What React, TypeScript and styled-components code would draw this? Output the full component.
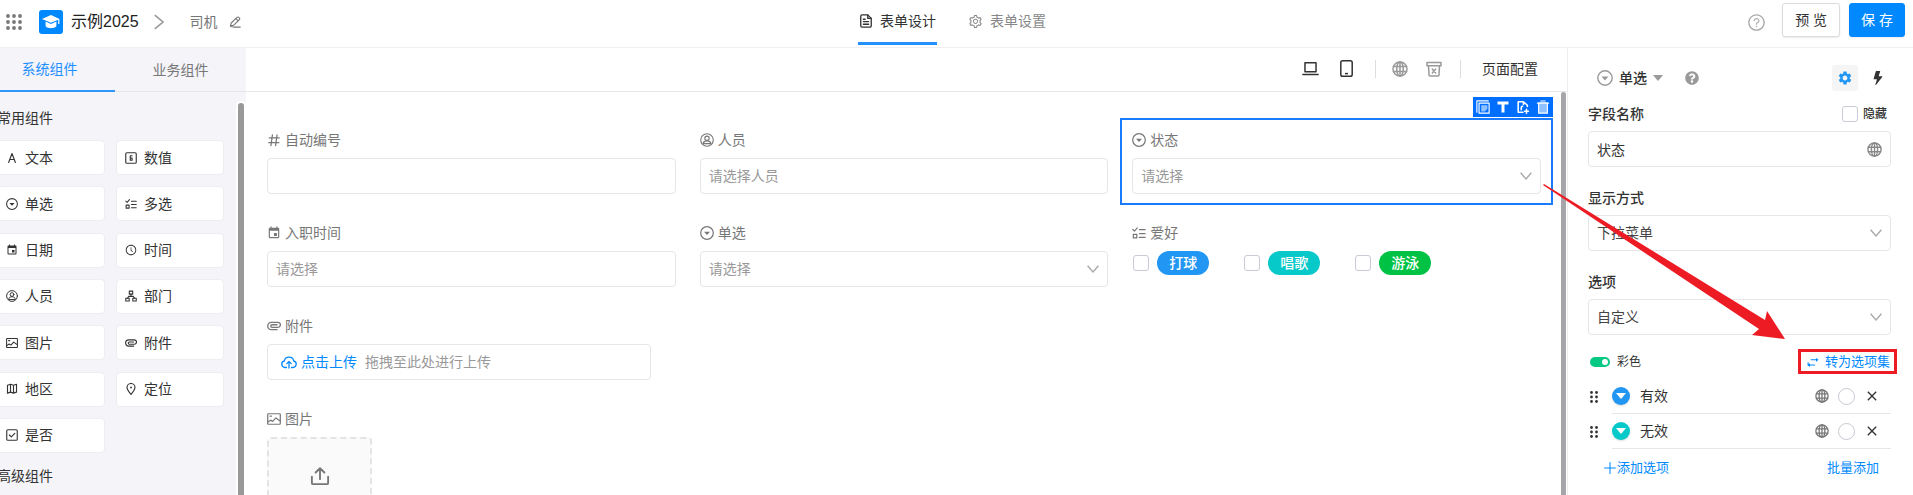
import React from "react";
import styled, { createGlobalStyle, css } from "styled-components";
import { FaQuestionCircle } from "react-icons/fa";
import { MdSettings, MdEvent, MdClose } from "react-icons/md";
import {
  AiOutlineSetting,
  AiOutlineQuestionCircle,
  AiOutlineClockCircle,
} from "react-icons/ai";
import { BsLightningFill } from "react-icons/bs";

const blue = "#0089ff";
const line = "#e6e6e6";

const Global = createGlobalStyle`
  *, *::before, *::after { box-sizing: border-box; }
  html, body, #root { height: 100%; }
  body {
    margin: 0;
    background: #fff;
    color: #333;
    font-family: "Liberation Sans", "Noto Sans CJK SC", sans-serif;
    font-size: 14px;
    line-height: 20px;
    overflow: hidden;
  }
  button, input, select { font: inherit; color: inherit; margin: 0; }
  button { border: 0; background: none; padding: 0; cursor: pointer; }
  a { text-decoration: none; color: inherit; }
  h1, h2 { margin: 0; font: inherit; }
  svg { display: block; flex: none; }
`;

/* ---------- icons ---------- */

type IconProps = { size?: number };

const Svg = ({
  size = 14,
  w = 1.3,
  children,
}: {
  size?: number;
  w?: number;
  children: React.ReactNode;
}) => (
  <svg
    width={size}
    height={size}
    viewBox="0 0 16 16"
    fill="none"
    stroke="currentColor"
    strokeWidth={w}
    strokeLinecap="round"
    strokeLinejoin="round"
    aria-hidden="true"
  >
    {children}
  </svg>
);

const AppsIcon = () => (
  <svg width="16" height="16" viewBox="0 0 16 16" fill="currentColor" aria-hidden="true">
    {[2, 8, 14].map((y) =>
      [2, 8, 14].map((x) => <circle key={`${x}-${y}`} cx={x} cy={y} r="1.9" />)
    )}
  </svg>
);

const CapIcon = () => (
  <svg width="20" height="20" viewBox="0 0 20 20" fill="currentColor" aria-hidden="true">
    <path d="M10 3 1 6.9l9 3.9 7.2-3.1V12h1.2V6.9z" />
    <path d="M4.6 9.6v4.2c0 1.2 2.6 2.4 5.4 2.4s5.4-1.2 5.4-2.4V9.6L10 12z" />
  </svg>
);

const ChevronRight = () => (
  <svg width="10" height="16" viewBox="0 0 10 16" fill="none" stroke="#999" strokeWidth="1.6" aria-hidden="true">
    <path d="M.8 1.2 9 8 .8 14.8" />
  </svg>
);

const ChevronDown = () => (
  <svg width="12" height="8" viewBox="0 0 12 8" fill="none" stroke="#aaa" strokeWidth="1.4" aria-hidden="true">
    <path d="M.6.8 6 7 11.4.8" />
  </svg>
);

const PenIcon = ({ size = 12 }: IconProps) => (
  <Svg size={size} w={1.5}>
    <path d="M2 13.5 3 9.3 10.6 1.8a1.6 1.6 0 0 1 2.4 0l.8.8a1.6 1.6 0 0 1 0 2.3l-7.4 7.4z" />
    <path d="m9.2 3.4 3 3M2 13.500c2 1.500 4 1.300 6 1.300h7" />
  </Svg>
);

const DocIcon = ({ size = 14 }: IconProps) => (
  <Svg size={size} w={1.5}>
    <path d="M10 1H3.5A1.5 1.5 0 0 0 2 2.500v11A1.5 1.5 0 0 0 3.500 15h9a1.5 1.5 0 0 0 1.500-1.500V5z" />
    <path d="M10 1v4h4M5 6h2M5 8.700h6M5 11.700h6" />
  </Svg>
);

const LetterIcon = ({ size = 12 }: IconProps) => (
  <Svg size={size} w={1.5}>
    <path d="M3.500 14 8 2l4.500 12M5 10h6" />
  </Svg>
);

const NumberIcon = ({ size = 12 }: IconProps) => (
  <Svg size={size} w={1.5}>
    <rect x="1" y="1" width="14" height="14" rx="1.500" />
    <path d="M9.500 5H7v6h2.500V8H7" />
  </Svg>
);

const RadioIcon = ({ size = 12 }: IconProps) => (
  <Svg size={size} w={1.4}>
    <circle cx="8" cy="8" r="7.200" />
    <path d="M4.600 6.600h6.800L8 10.400z" fill="currentColor" stroke="none" />
  </Svg>
);

const MultiIcon = ({ size = 12 }: IconProps) => (
  <Svg size={size} w={1.4}>
    <path d="m1 4 1.800 1.800L6 2.200M8.500 4.200H15M8.500 8.600H15M8.500 13H15" />
    <rect x="1.500" y="9.500" width="4" height="4" />
  </Svg>
);

const PersonIcon = ({ size = 12 }: IconProps) => (
  <Svg size={size} w={1.3}>
    <circle cx="8" cy="8" r="7.200" />
    <circle cx="8" cy="6" r="2.500" />
    <path d="M3.600 12.200c.4-2.400 2-3.200 4.400-3.200s4 .8 4.400 3.200z" />
  </Svg>
);

const DeptIcon = ({ size = 12 }: IconProps) => (
  <Svg size={size} w={1.4}>
    <rect x="5.700" y="1.500" width="4.600" height="4" />
    <rect x="1" y="11" width="4.600" height="3.600" />
    <rect x="10.400" y="11" width="4.600" height="3.600" />
    <path d="M8 5.500v3M3.300 11 5 8.500h6l1.700 2.500" />
  </Svg>
);

const ImageIcon = ({ size = 12 }: IconProps) => (
  <Svg size={size} w={1.4}>
    <rect x=".8" y="2" width="14.400" height="12" rx=".8" />
    <path d="m1 11.500 3.200-2.200 2.300 1.500 3.700-4 4.800 3.400M3.500 4.800h1.500" />
  </Svg>
);

const ClipIcon = ({ size = 12 }: IconProps) => (
  <Svg size={size} w={1.5}>
    <path d="M11.500 12.200H5A4.200 4.200 0 0 1 5 3.800h7.400a2.900 2.900 0 0 1 0 5.800H5.800a1.500 1.500 0 0 1 0-3h5.700" />
  </Svg>
);

const MapIcon = ({ size = 12 }: IconProps) => (
  <Svg size={size} w={1.5}>
    <path d="M2 3v10.500l4-1.300 4 1.300 4-1.300V1.700L10 3 6 1.700zM6 1.700v10.500M10 3v10.500" />
  </Svg>
);

const PinIcon = ({ size = 12 }: IconProps) => (
  <Svg size={size} w={1.5}>
    <path d="M8 15.200C5 11.500 2.700 9 2.700 6a5.300 5.300 0 0 1 10.600 0c0 3-2.300 5.500-5.300 9.200z" />
    <circle cx="8" cy="6" r="1.200" fill="currentColor" stroke="none" />
  </Svg>
);

const CheckIcon = ({ size = 12 }: IconProps) => (
  <Svg size={size} w={1.5}>
    <rect x="1" y="1" width="14" height="14" rx="1.500" />
    <path d="m4.500 8 2.600 2.600 4.600-4.800" />
  </Svg>
);

const HashIcon = ({ size = 12 }: IconProps) => (
  <Svg size={size} w={1.4}>
    <path d="M6.200 2 4.500 14.500M11.500 2 9.800 14.500M2.500 5.500h11.500M2 11h11.500" />
  </Svg>
);

const GlobeIcon = ({ size = 16 }: IconProps) => (
  <Svg size={size} w={1.5}>
    <circle cx="8" cy="8" r="7" />
    <ellipse cx="8" cy="8" rx="3.300" ry="7" />
    <path d="M8 1v14M1.500 5.600h13M1.500 10.400h13" />
  </Svg>
);

const LaptopIcon = () => (
  <Svg size={17} w={1.4}>
    <path d="M2.800 2.500h10.400v8.600H2.800zM.8 13.700h14.400" />
  </Svg>
);

const PhoneIcon = () => (
  <svg width="13" height="17" viewBox="0 0 13 17" fill="none" stroke="currentColor" strokeWidth="1.500" aria-hidden="true">
    <rect x=".8" y=".8" width="11.400" height="15.400" rx="1.800" />
    <path d="M5 13.600h3" />
  </svg>
);

const BinIcon = () => (
  <Svg size={16} w={1.500}>
    <path d="M1 1.500h14v3.200H1zM2.500 4.700l.5 9.300a1 1 0 0 0 1 1h8a1 1 0 0 0 1-1l.5-9.300M6.300 8l3.400 4M9.700 8l-3.400 4" />
  </Svg>
);

const CopyIcon = () => (
  <Svg size={14} w={1.300}>
    <path d="M1 14V1h13" />
    <rect x="3.500" y="3.500" width="11.500" height="11.500" />
    <path d="M6 6h7v4l-3 3H6z" fill="#8fc1ff" stroke="none" />
  </Svg>
);

const TextToolIcon = () => (
  <svg width="12" height="12" viewBox="0 0 12 12" fill="currentColor" aria-hidden="true">
    <path d="M.5.5h11v3h-4v8h-3v-8h-4z" />
  </svg>
);

const ExportIcon = () => (
  <Svg size={14} w={1.800}>
    <path d="M8 14H2.500V2H8.500l4.500 4v1.500M8.500 2v3M6 11V8.500c0-.8.600-1.200 1.400-1.200M12 10.500v4.500M9.800 12.800h4.400" />
  </Svg>
);

const TrashIcon = () => (
  <Svg size={14} w={1.300}>
    <path d="M1.500 3.500h13M5.500 1.200h5" />
    <path d="M3 3.500h10V15H3z" fill="#8fc1ff" />
  </Svg>
);

const CloudIcon = () => (
  <Svg size={16} w={1.300}>
    <path d="M5.500 13.500H4A3.300 3.300 0 0 1 3.300 7a4.800 4.800 0 0 1 9.400 0 3.300 3.300 0 0 1-.7 6.500h-1.500M8 14V7.500M5.800 9.600 8 7.400l2.200 2.200" />
  </Svg>
);

const UploadIcon = () => (
  <Svg size={20} w={1.500}>
    <path d="M8 10.500V2M4.500 5.200 8 1.800l3.500 3.400M1.500 8.500v5a1 1 0 0 0 1 1h11a1 1 0 0 0 1-1v-5" />
  </Svg>
);

const SwapIcon = () => (
  <Svg size={12} w={1.500}>
    <path d="M5.500 5H13M1.500 9v3H10" />
    <path d="M12 2.500 15.500 5 12 7.500zM4 9.500.8 12 4 14.500z" fill="currentColor" stroke="none" />
  </Svg>
);

const PlusIcon = () => (
  <Svg size={12} w={1.400}>
    <path d="M8 .8v14.400M.8 8h14.400" />
  </Svg>
);

const CaretDown = () => (
  <svg width="10" height="6" viewBox="0 0 10 6" fill="#999" aria-hidden="true">
    <path d="M0 0h10L5 6z" />
  </svg>
);

const DragIcon = () => (
  <svg width="8" height="12" viewBox="0 0 8 12" fill="#333" aria-hidden="true">
    {[1.5, 6, 10.5].map((y) =>
      [1.5, 6.5].map((x) => <circle key={`${x}-${y}`} cx={x} cy={y} r="1.400" />)
    )}
  </svg>
);

/* ---------- header ---------- */

const Shell = styled.div`
  display: flex;
  flex-direction: column;
  height: 100vh;
  overflow: hidden;
`;

const Header = styled.header`
  display: grid;
  grid-template-columns: 1fr auto 1fr;
  height: 48px;
  flex: none;
  border-bottom: 1px solid #f0f0f2;
`;

const HeaderLeft = styled.div`
  display: flex;
  align-items: center;
  height: 44px;
  padding-left: 6px;
  color: #777;
`;

const Logo = styled.div`
  display: grid;
  place-items: center;
  width: 24px;
  height: 24px;
  margin: 0 8px 0 17px;
  border-radius: 3px;
  background: ${blue};
  color: #fff;
`;

const AppName = styled.h1`
  margin-right: 15px;
  font-size: 16px;
  color: #222;
`;

const PageName = styled.span`
  margin: 0 11px 0 26px;
`;

const HeaderTabs = styled.nav`
  display: flex;
  gap: 30px;
  margin-right: 8px;
`;

const HeaderTab = styled.a<{ $active?: boolean }>`
  display: flex;
  align-items: center;
  gap: 7px;
  height: 45px;
  padding: 0 1px;
  border-bottom: 3px solid ${(p) => (p.$active ? "#2391ff" : "transparent")};
  color: ${(p) => (p.$active ? "#333" : "#888")};
`;

const HeaderRight = styled.div`
  display: flex;
  justify-content: flex-end;
  align-items: flex-start;
  padding: 3px 8px 0 0;
`;

const HelpButton = styled.button`
  height: 38px;
  margin-right: 16px;
  color: #aaa;
`;

const ActionButton = styled.button<{ $primary?: boolean }>`
  height: 34px;
  padding: 0 ${(p) => (p.$primary ? 11 : 12)}px;
  margin-left: ${(p) => (p.$primary ? 9 : 0)}px;
  border: 1px solid ${(p) => (p.$primary ? blue : "#dcdce0")};
  border-radius: 3px;
  background: ${(p) => (p.$primary ? blue : "#fff")};
  color: ${(p) => (p.$primary ? "#fff" : "#333")};
  box-shadow: 0 1px 2px rgba(0, 0, 0, 0.08);
`;

const Body = styled.div`
  display: flex;
  flex: 1;
  min-height: 0;
`;

/* ---------- component palette ---------- */

const Sidebar = styled.aside`
  display: flex;
  width: 246px;
  flex: none;
  overflow: hidden;
  background: #f4f4f9;
`;

const SidebarInner = styled.div`
  display: flex;
  flex-direction: column;
  flex: 1;
  margin-left: -16px;
`;

const SideTabs = styled.div`
  display: flex;
  flex: none;
  height: 44px;
`;

const SideTab = styled.button<{ $active?: boolean }>`
  flex: 1;
  border-bottom: ${(p) => (p.$active ? "2px solid #2d97f8" : `1px solid ${line}`)};
  color: ${(p) => (p.$active ? "#1e90ff" : "#777")};
`;

const PaletteArea = styled.div`
  display: flex;
  flex: 1;
  min-height: 0;
`;

const Palette = styled.div`
  flex: 1;
  padding: 16px 12px 0 13px;
`;

const PaletteTitle = styled.h2`
  margin-bottom: 12px;
`;

const PaletteGrid = styled.div`
  display: grid;
  grid-template-columns: 1fr 1fr;
  align-content: space-between;
  column-gap: 11px;
  min-height: 313px;
  margin-bottom: 13px;
`;

const PaletteItem = styled.button`
  display: flex;
  align-items: center;
  gap: 7px;
  height: 35px;
  padding: 0 8px;
  border: 1px solid #ededf2;
  border-radius: 4px;
  background: #fff;
`;

const SideTrack = styled.div`
  width: 10px;
  margin-top: 9px;
  padding: 2px 2px 0;
  border-radius: 4px 4px 0 0;
  background: #fff;
`;

const Thumb = styled.div<{ $color: string }>`
  height: 100%;
  border-radius: 3px 3px 0 0;
  background: ${(p) => p.$color};
`;

/* ---------- canvas ---------- */

const Main = styled.main`
  display: flex;
  flex-direction: column;
  flex: 1;
  min-width: 0;
`;

const Toolbar = styled.div`
  display: flex;
  justify-content: flex-end;
  align-items: center;
  flex: none;
  height: 44px;
  padding: 0 29px 2px 0;
  border-bottom: 1px solid ${line};
`;

const ToolGroup = styled.div<{ $muted?: boolean }>`
  display: flex;
  align-items: center;
  gap: ${(p) => (p.$muted ? 18 : 21)}px;
  padding-right: ${(p) => (p.$muted ? 18 : 22)}px;
  margin-right: ${(p) => (p.$muted ? 21 : 16)}px;
  height: 18px;
  border-right: 1px solid #ddd;
  color: ${(p) => (p.$muted ? "#999" : "#333")};
`;

const CanvasArea = styled.div`
  display: flex;
  flex: 1;
  min-height: 0;
`;

const FormGrid = styled.form`
  flex: 1;
  display: grid;
  grid-template-columns: repeat(3, 1fr);
  align-content: start;
  row-gap: 6px;
  padding: 26px 8px 0 9px;
`;

const CanvasTrack = styled.div`
  width: 6px;
  padding: 0 1px 0 0;
`;

const Cell = styled.div<{ $selected?: boolean; $start?: boolean }>`
  position: relative;
  min-height: 87px;
  padding: 10px 10px 9px;
  border: 2px solid ${(p) => (p.$selected ? "#1a7bff" : "transparent")};
  ${(p) => p.$start && css`grid-column: 1;`}
`;

const CellLabel = styled.label`
  display: flex;
  align-items: center;
  gap: 4px;
  margin-bottom: 8px;
  color: #777;
`;

const IconBox = styled.span`
  display: grid;
  place-items: center;
  width: 14px;
  height: 14px;
`;

const controlStyle = css`
  display: block;
  width: 100%;
  height: 36px;
  padding: 0 8px;
  border: 1px solid ${line};
  border-radius: 4px;
  background: #fff;
  outline: none;
  appearance: none;
  &::placeholder {
    color: #999;
    opacity: 1;
  }
`;

const TextBox = styled.input`
  ${controlStyle}
`;

const SelectBox = styled.select<{ $empty?: boolean }>`
  ${controlStyle}
  color: ${(p) => (p.$empty ? "#999" : "#444")};
`;

const ControlWrap = styled.div`
  position: relative;
`;

const Adornment = styled.span`
  position: absolute;
  top: 0;
  bottom: 0;
  right: 9px;
  display: flex;
  align-items: center;
  color: #888;
  pointer-events: none;
`;

const CellTools = styled.div`
  position: absolute;
  right: -2px;
  bottom: 100%;
  display: grid;
  grid-template-columns: repeat(4, 20px);
  height: 20px;
  margin-bottom: 3px;
  background: #006fff;
  color: #fff;
`;

const CellTool = styled.button`
  display: grid;
  place-items: center;
`;

const CheckRow = styled.div`
  display: flex;
  gap: 34px;
`;

const CheckOption = styled.label`
  display: flex;
  align-items: center;
  gap: 8px;
  padding-left: 1px;
`;

const Tick = styled.input`
  appearance: none;
  flex: none;
  width: 16px;
  height: 16px;
  border: 1px solid #cacad6;
  border-radius: 3px;
  background: #fff;
`;

const Pill = styled.span<{ $color: string }>`
  padding: 2px 12px;
  border-radius: 12px;
  background: ${(p) => p.$color};
  color: #fff;
  font-weight: 500;
`;

const DropZone = styled.div`
  display: flex;
  align-items: center;
  gap: 8px;
  width: 94%;
  height: 36px;
  padding: 0 13px;
  border: 1px solid ${line};
  border-radius: 4px;
  color: #999;
`;

const UploadLink = styled.button`
  display: flex;
  align-items: center;
  gap: 4px;
  color: ${blue};
`;

const PictureDrop = styled.button`
  display: flex;
  align-items: center;
  justify-content: center;
  width: 105px;
  height: 105px;
  padding-bottom: 28px;
  border: 2px dashed #e4e4e4;
  border-radius: 4px;
  background: #fafafa;
  color: #777;
`;

/* ---------- settings panel ---------- */

const Panel = styled.aside`
  position: relative;
  width: 346px;
  flex: none;
  padding: 17px 22px 0 20px;
  border-left: 1px solid #ededed;
`;

const PanelHead = styled.div`
  display: flex;
  align-items: center;
  height: 26px;
  margin-bottom: 13px;
  padding-left: 9px;
  color: #999;
`;

const TypeButton = styled.button`
  display: flex;
  align-items: center;
  gap: 6px;
  margin-right: 22px;
  color: #999;
`;

const Strong = styled.span`
  color: #333;
  font-weight: 500;
`;

const PanelTools = styled.div`
  display: flex;
  gap: 7px;
  margin-left: auto;
`;

const PanelTool = styled.button<{ $active?: boolean }>`
  display: grid;
  place-items: center;
  width: 26px;
  height: 26px;
  border-radius: 3px;
  background: ${(p) => (p.$active ? "#f5f5f5" : "none")};
  color: ${(p) => (p.$active ? "#2196f3" : "#333")};
`;

const LabelRow = styled.div`
  display: flex;
  align-items: center;
  justify-content: space-between;
  margin-bottom: 7px;
  padding-right: 4px;
  font-weight: 500;
`;

const HideOption = styled.label`
  display: flex;
  align-items: center;
  gap: 5px;
  font-size: 12px;
`;

const Group = styled.section`
  margin-bottom: 21px;
`;

const OptionHead = styled.div`
  display: flex;
  align-items: center;
  justify-content: space-between;
  height: 25px;
  margin: -7px -6px 5px 2px;
`;

const SwitchLabel = styled.label`
  display: flex;
  align-items: center;
  gap: 7px;
  font-size: 12px;
`;

const Switch = styled.input`
  appearance: none;
  display: flex;
  align-items: center;
  justify-content: flex-end;
  width: 20px;
  height: 10px;
  padding: 2px;
  border-radius: 5px;
  background: #07c983;
  &::after {
    content: "";
    width: 6px;
    height: 6px;
    border-radius: 3px;
    background: #fff;
  }
`;

const ConvertButton = styled.button`
  display: flex;
  align-items: center;
  gap: 6px;
  height: 25px;
  padding: 0 4px 0 6px;
  border: 3px solid #ed1c24;
  color: ${blue};
  font-size: 13px;
`;

const OptionRow = styled.div`
  display: flex;
  align-items: stretch;
  height: 35px;
`;

const DragHandle = styled.span`
  display: flex;
  align-items: center;
  width: 24px;
  padding-left: 2px;
`;

const OptionBody = styled.div`
  display: flex;
  align-items: center;
  flex: 1;
  padding-right: 11px;
  border-bottom: 1px solid ${line};
`;

const ColorDot = styled.button<{ $color: string }>`
  display: grid;
  place-items: center;
  width: 18px;
  height: 18px;
  margin-right: 10px;
  border-radius: 9px;
  background: ${(p) => p.$color};
  box-shadow: 0 1px 2px rgba(0, 0, 0, 0.15);
`;

const OptionTools = styled.div`
  display: flex;
  align-items: center;
  gap: 9px;
  margin-left: auto;
  color: #777;
`;

const DefaultRadio = styled.input`
  appearance: none;
  width: 17px;
  height: 17px;
  border: 1px solid #c8c8d2;
  border-radius: 9px;
`;

const RemoveButton = styled.button`
  color: #333;
`;

const PanelFoot = styled.div`
  display: flex;
  justify-content: space-between;
  padding: 9px 12px 0 16px;
`;

const LinkButton = styled.button`
  display: flex;
  align-items: center;
  gap: 1px;
  color: ${blue};
  font-size: 13px;
`;

const Arrow = styled.svg`
  position: absolute;
  left: -27px;
  top: 134px;
  pointer-events: none;
`;

/* ---------- page ---------- */

const palette: [string, React.ReactNode][] = [
  ["文本", <LetterIcon />],
  ["数值", <NumberIcon />],
  ["单选", <RadioIcon />],
  ["多选", <MultiIcon />],
  ["日期", <MdEvent size={12} />],
  ["时间", <AiOutlineClockCircle size={12} />],
  ["人员", <PersonIcon />],
  ["部门", <DeptIcon />],
  ["图片", <ImageIcon />],
  ["附件", <ClipIcon />],
  ["地区", <MapIcon />],
  ["定位", <PinIcon />],
  ["是否", <CheckIcon />],
];

const hobbies = [
  { name: "打球", color: "#2196f3" },
  { name: "唱歌", color: "#08c9c9" },
  { name: "游泳", color: "#00c345" },
];

const options = [
  { name: "有效", color: "#2196f3" },
  { name: "无效", color: "#08c9c9" },
];

const FieldLabel = ({ id, icon, text }: { id: string; icon: React.ReactNode; text: string }) => (
  <CellLabel htmlFor={id}>
    <IconBox>{icon}</IconBox>
    {text}
  </CellLabel>
);

const Dropdown = ({ id, value, empty }: { id: string; value: string; empty?: boolean }) => (
  <ControlWrap>
    <SelectBox id={id} $empty={empty}>
      <option>{value}</option>
    </SelectBox>
    <Adornment>
      <ChevronDown />
    </Adornment>
  </ControlWrap>
);

export default function App() {
  return (
    <>
      <Global />
      <Shell>
        <Header>
          <HeaderLeft>
            <AppsIcon />
            <Logo>
              <CapIcon />
            </Logo>
            <AppName>示例2025</AppName>
            <ChevronRight />
            <PageName>司机</PageName>
            <PenIcon />
          </HeaderLeft>
          <HeaderTabs>
            <HeaderTab href="#design" $active>
              <DocIcon />
              表单设计
            </HeaderTab>
            <HeaderTab href="#settings">
              <AiOutlineSetting size={15} />
              表单设置
            </HeaderTab>
          </HeaderTabs>
          <HeaderRight>
            <HelpButton aria-label="帮助">
              <AiOutlineQuestionCircle size={19} />
            </HelpButton>
            <ActionButton>预 览</ActionButton>
            <ActionButton $primary>保 存</ActionButton>
          </HeaderRight>
        </Header>

        <Body>
          <Sidebar>
            <SidebarInner>
              <SideTabs>
                <SideTab $active>系统组件</SideTab>
                <SideTab>业务组件</SideTab>
              </SideTabs>
              <PaletteArea>
                <Palette>
                  <PaletteTitle>常用组件</PaletteTitle>
                  <PaletteGrid>
                    {palette.map(([name, icon]) => (
                      <PaletteItem key={name}>
                        {icon}
                        {name}
                      </PaletteItem>
                    ))}
                  </PaletteGrid>
                  <PaletteTitle>高级组件</PaletteTitle>
                </Palette>
                <SideTrack>
                  <Thumb $color="#999" />
                </SideTrack>
              </PaletteArea>
            </SidebarInner>
          </Sidebar>

          <Main>
            <Toolbar>
              <ToolGroup>
                <LaptopIcon />
                <PhoneIcon />
              </ToolGroup>
              <ToolGroup $muted>
                <GlobeIcon />
                <BinIcon />
              </ToolGroup>
              <button>页面配置</button>
            </Toolbar>
            <CanvasArea>
              <FormGrid>
                <Cell>
                  <FieldLabel id="serial" icon={<HashIcon size={14} />} text="自动编号" />
                  <TextBox id="serial" />
                </Cell>
                <Cell>
                  <FieldLabel id="person" icon={<PersonIcon size={14} />} text="人员" />
                  <TextBox id="person" placeholder="请选择人员" />
                </Cell>
                <Cell $selected>
                  <CellTools>
                    <CellTool type="button" aria-label="复制"><CopyIcon /></CellTool>
                    <CellTool type="button" aria-label="标题"><TextToolIcon /></CellTool>
                    <CellTool type="button" aria-label="导出"><ExportIcon /></CellTool>
                    <CellTool type="button" aria-label="删除"><TrashIcon /></CellTool>
                  </CellTools>
                  <FieldLabel id="state" icon={<RadioIcon size={14} />} text="状态" />
                  <Dropdown id="state" value="请选择" empty />
                </Cell>
                <Cell>
                  <FieldLabel id="joined" icon={<MdEvent size={14} />} text="入职时间" />
                  <TextBox id="joined" placeholder="请选择" />
                </Cell>
                <Cell>
                  <FieldLabel id="single" icon={<RadioIcon size={14} />} text="单选" />
                  <Dropdown id="single" value="请选择" empty />
                </Cell>
                <Cell>
                  <FieldLabel id="hobby-0" icon={<MultiIcon size={14} />} text="爱好" />
                  <CheckRow>
                    {hobbies.map((h, i) => (
                      <CheckOption key={h.name}>
                        <Tick type="checkbox" id={`hobby-${i}`} />
                        <Pill $color={h.color}>{h.name}</Pill>
                      </CheckOption>
                    ))}
                  </CheckRow>
                </Cell>
                <Cell $start>
                  <FieldLabel id="files" icon={<ClipIcon size={14} />} text="附件" />
                  <DropZone>
                    <UploadLink type="button" id="files">
                      <CloudIcon />
                      点击上传
                    </UploadLink>
                    拖拽至此处进行上传
                  </DropZone>
                </Cell>
                <Cell $start>
                  <FieldLabel id="pictures" icon={<ImageIcon size={14} />} text="图片" />
                  <PictureDrop type="button" id="pictures">
                    <UploadIcon />
                  </PictureDrop>
                </Cell>
              </FormGrid>
              <CanvasTrack>
                <Thumb $color="#a6a6aa" />
              </CanvasTrack>
            </CanvasArea>
          </Main>

          <Panel>
            <PanelHead>
              <TypeButton>
                <RadioIcon size={16} />
                <Strong>单选</Strong>
                <CaretDown />
              </TypeButton>
              <FaQuestionCircle size={14} />
              <PanelTools>
                <PanelTool $active aria-label="属性">
                  <MdSettings size={16} />
                </PanelTool>
                <PanelTool aria-label="事件">
                  <BsLightningFill size={14} />
                </PanelTool>
              </PanelTools>
            </PanelHead>

            <Group>
              <LabelRow>
                <label htmlFor="field-name">字段名称</label>
                <HideOption>
                  <Tick type="checkbox" />
                  隐藏
                </HideOption>
              </LabelRow>
              <ControlWrap>
                <TextBox id="field-name" defaultValue="状态" />
                <Adornment>
                  <GlobeIcon size={15} />
                </Adornment>
              </ControlWrap>
            </Group>

            <Group>
              <LabelRow>
                <label htmlFor="display-mode">显示方式</label>
              </LabelRow>
              <Dropdown id="display-mode" value="下拉菜单" />
            </Group>

            <Group>
              <LabelRow>
                <label htmlFor="option-source">选项</label>
              </LabelRow>
              <Dropdown id="option-source" value="自定义" />
            </Group>

            <OptionHead>
              <SwitchLabel>
                <Switch type="checkbox" defaultChecked />
                彩色
              </SwitchLabel>
              <ConvertButton>
                <SwapIcon />
                转为选项集
              </ConvertButton>
            </OptionHead>

            {options.map((o) => (
              <OptionRow key={o.name}>
                <DragHandle>
                  <DragIcon />
                </DragHandle>
                <OptionBody>
                  <ColorDot $color={o.color} aria-label="颜色">
                    <svg width="10" height="6" viewBox="0 0 10 6" fill="#fff" aria-hidden="true">
                      <path d="M0 0h10L5 6z" />
                    </svg>
                  </ColorDot>
                  {o.name}
                  <OptionTools>
                    <GlobeIcon size={14} />
                    <DefaultRadio type="radio" name="default-option" aria-label={o.name} />
                    <RemoveButton aria-label="移除">
                      <MdClose size={16} />
                    </RemoveButton>
                  </OptionTools>
                </OptionBody>
              </OptionRow>
            ))}

            <PanelFoot>
              <LinkButton>
                <PlusIcon />
                添加选项
              </LinkButton>
              <LinkButton>批量添加</LinkButton>
            </PanelFoot>

            <Arrow width="246" height="160" viewBox="0 0 246 160" fill="#ed1c24" aria-hidden="true">
              <path d="M2 3 3 2 224 138 226 129 244 157 211 153 218 147z" />
            </Arrow>
          </Panel>
        </Body>
      </Shell>
    </>
  );
}
